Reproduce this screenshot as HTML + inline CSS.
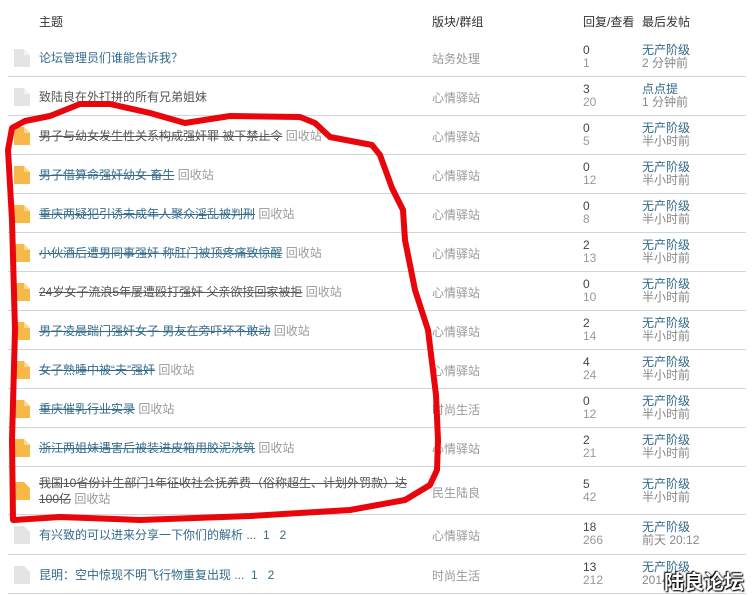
<!DOCTYPE html>
<html><head><meta charset="utf-8"><style>
body{margin:0;width:756px;height:594px;background:#fff;font-family:"Liberation Sans","Noto Sans CJK SC",sans-serif;font-size:12px;position:relative;overflow:hidden}
.h{position:absolute;top:13px;color:#333}
.row{position:absolute;left:8px;width:738px;border-bottom:1px solid #cdd6de}
.ic{position:absolute;left:6px;width:16px;height:18px}
.t{position:absolute;left:31px;color:#336a8a;line-height:16px}
.t s{color:#336a8a}
.g s{color:#555}
.r{color:#999}
.f{position:absolute;left:424px;color:#999}
.n{position:absolute;left:575px;line-height:13px}
.n b{font-weight:normal;color:#444;display:block}
.n i{font-style:normal;color:#999;display:block}
.l{position:absolute;left:634px;line-height:13px}
.l b{font-weight:normal;color:#336a8a;display:block}
.l i{font-style:normal;color:#888;display:block}
</style></head><body>
<div class="h" style="left:39px">主题</div>
<div class="h" style="left:432px">版块/群组</div>
<div class="h" style="left:583px">回复/查看</div>
<div class="h" style="left:642px">最后发帖</div>

<div id="rows"></div>
<script>
(function(){
var R=[
["论坛管理员们谁能告诉我？","站务处理","0","1","无产阶级","2 分钟前",0,0],
["致陆良在外打拼的所有兄弟姐妹","心情驿站","3","20","点点提","1 分钟前",0,2],
["男子与幼女发生性关系构成强奸罪 被下禁止令","心情驿站","0","5","无产阶级","半小时前",1,1],
["男子借算命强奸幼女 畜生","心情驿站","0","12","无产阶级","半小时前",1,0],
["重庆两疑犯引诱未成年人聚众淫乱被判刑","心情驿站","0","8","无产阶级","半小时前",1,0],
["小伙酒后遭男同事强奸 称肛门被顶疼痛致惊醒","心情驿站","2","13","无产阶级","半小时前",1,0],
["24岁女子流浪5年屡遭殴打强奸 父亲欲接回家被拒","心情驿站","0","10","无产阶级","半小时前",1,1],
["男子凌晨踹门强奸女子 男友在旁吓坏不敢动","心情驿站","2","14","无产阶级","半小时前",1,0],
["女子熟睡中被\u201c夫\u201d强奸","心情驿站","4","24","无产阶级","半小时前",1,0],
["重庆催乳行业实录","时尚生活","0","12","无产阶级","半小时前",1,0],
["浙江两姐妹遇害后被装进皮箱用胶泥浇筑","心情驿站","2","21","无产阶级","半小时前",1,0]
];
var h='';
for(var k=0;k<R.length;k++){var r=R[k];var yy=38+k*39;
var ic=r[6]?'#f7b84a':'#e4e4e4';
var tt=r[6]?'<span class="'+(r[7]==1?'g':'')+'"><s>'+r[0]+'</s></span> <span class="r">回收站</span>':(r[7]==2?'<span style="color:#555">'+r[0]+'</span>':r[0]);
h+='<div class="row" style="top:'+yy+'px;height:38px"><svg class="ic" style="top:11px" viewBox="0 0 16 18"><path d="M0 0H10L16 6V18H0Z" fill="'+ic+'"/><path d="M10 0V6H16" fill="'+(r[6]?'#fcd78d':'#f2f2f2')+'"/></svg><div class="t" style="top:12px">'+tt+'</div><div class="f" style="top:12px">'+r[1]+'</div><div class="n" style="top:6px"><b>'+r[2]+'</b><i>'+r[3]+'</i></div><div class="l" style="top:6px"><b>'+r[4]+'</b><i>'+r[5]+'</i></div></div>';}
document.getElementById('rows').innerHTML=h;
})();
</script>
<div class="row" style="top:467px;height:47px"><svg class="ic" style="top:15px" viewBox="0 0 16 18"><path d="M0 0H10L16 6V18H0Z" fill="#f7b84a"/></svg><div class="t g" style="top:8px;width:380px"><s>我国10省份计生部门1年征收社会抚养费（俗称超生、计划外罚款）达100亿</s> <span class="r">回收站</span></div><div class="f" style="top:17px">民生陆良</div><div class="n" style="top:11px"><b>5</b><i>42</i></div><div class="l" style="top:11px"><b>无产阶级</b><i>半小时前</i></div></div>
<div class="row" style="top:515px;height:39px"><svg class="ic" style="top:11px" viewBox="0 0 16 18"><path d="M0 0H10L16 6V18H0Z" fill="#e4e4e4"/></svg><div class="t" style="top:12px">有兴致的可以进来分享一下你们的解析 ... &nbsp;1 &nbsp; 2</div><div class="f" style="top:12px">心情驿站</div><div class="n" style="top:6px"><b>18</b><i>266</i></div><div class="l" style="top:6px"><b>无产阶级</b><i>前天 20:12</i></div></div>
<div class="row" style="top:555px;height:38px"><svg class="ic" style="top:11px" viewBox="0 0 16 18"><path d="M0 0H10L16 6V18H0Z" fill="#e4e4e4"/></svg><div class="t" style="top:12px">昆明：空中惊现不明飞行物重复出现 ... &nbsp;1 &nbsp; 2</div><div class="f" style="top:12px">时尚生活</div><div class="n" style="top:6px"><b>13</b><i>212</i></div><div class="l" style="top:6px"><b>无产阶级</b><i>2014</i></div></div>
<div style="position:absolute;left:664px;top:566px;font-size:20px;color:#fff;font-weight:bold;text-shadow:0 0 2px #000,1px 1px 1px #000,-1px -1px 1px #000">陆良论坛</div>
<svg style="position:absolute;left:0;top:0" width="756" height="594"><path d="M13 520 L12 440 L15 330 L12 220 L8 150 L12 128 L25 121 L50 116 L65 110 L80 104 L110 104 L150 113 L185 123 L230 116 L300 117 L315 123 L330 137 L372 145 L380 155 L392 188 L403 210 L405 240 L415 290 L428 330 L436 395 L438 440 L437 470 L430 485 L405 500 L350 510 L250 516 L140 520 L60 517 L14 520" fill="none" stroke="#e8060c" stroke-width="6" stroke-linejoin="round" stroke-linecap="round"/></svg>
</body></html>
